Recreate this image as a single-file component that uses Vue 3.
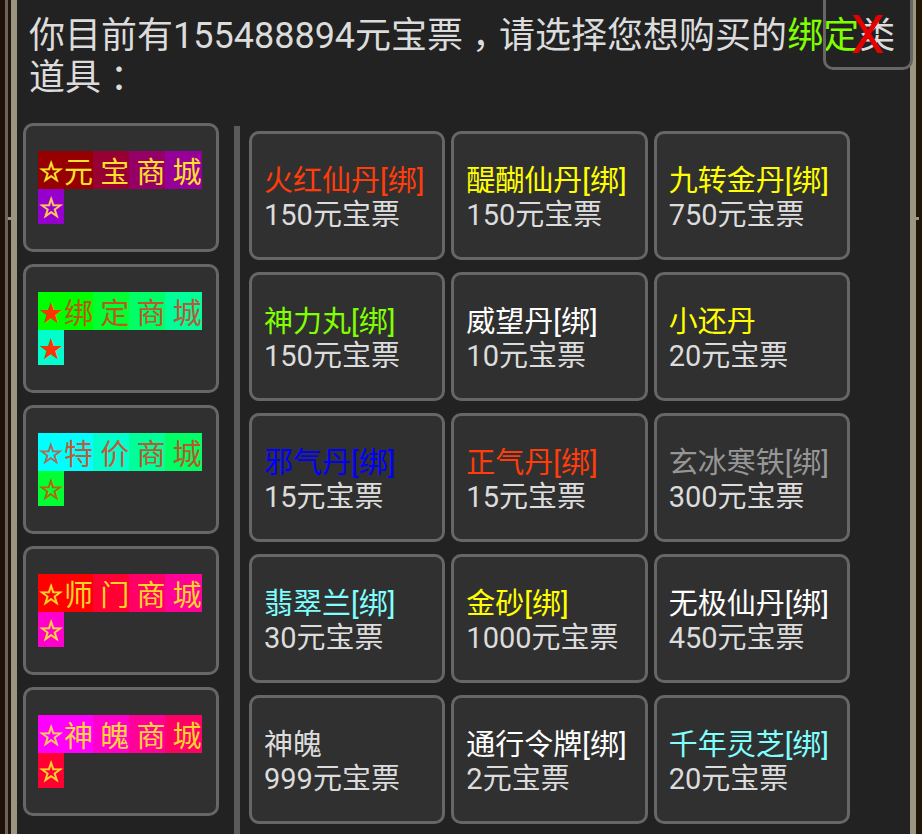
<script setup>
const categories = [
  { star: '☆', name: '元宝商城', ink: ['#ffe02a', '#ffe02a', '#ffe02a', '#ffe02a', '#ffe02a', '#ffc85c'], fills: ['#960000', '#960000', '#960033', '#960066', '#960099', '#9600cc'] },
  { star: '★', name: '绑定商城', ink: ['#ff3300', '#b85a0a', '#b85a1e', '#b85a32', '#b85a3c', '#ff3300'], fills: ['#00ff00', '#00ff00', '#00ff33', '#00ff66', '#00ff99', '#00ffcc'] },
  { star: '☆', name: '特价商城', ink: ['#a8705a', '#c05a3c', '#c05a3c', '#b85a32', '#b85a28', '#b06a0a'], fills: ['#00ffff', '#00ffff', '#00ffcc', '#00ff99', '#00ff66', '#00ff33'] },
  { star: '☆', name: '师门商城', ink: ['#ffd42a', '#ffd42a', '#ffd42a', '#ffd42a', '#ffd42a', '#ffd43c'], fills: ['#ff0000', '#ff0000', '#ff0033', '#ff0066', '#ff0099', '#ff00cc'] },
  { star: '☆', name: '神魄商城', ink: ['#ffc85c', '#ffd43c', '#ffd43c', '#ffd43c', '#ffd42a', '#ffd42a'], fills: ['#ff00ff', '#ff00ff', '#ff00cc', '#ff0099', '#ff0066', '#ff0033'] }
]

const tilesOf = (c) => [c.star, ...c.name, c.star].map((text, i) => ({
  text: i > 1 && i < 5 ? ' ' + text : text,
  star: i === 0 || i === 5,
  hollow: text === '☆',
  last: i === 5,
  style: { color: c.ink[i], background: c.fills[i] }
}))

const items = [
  { name: '火红仙丹[绑]', price: 150, color: '#ff3c0a' },
  { name: '醍醐仙丹[绑]', price: 150, color: '#ffff00' },
  { name: '九转金丹[绑]', price: 750, color: '#ffff00' },
  { name: '神力丸[绑]', price: 150, color: '#80ff00' },
  { name: '威望丹[绑]', price: 10, color: '#ffffff' },
  { name: '小还丹', price: 20, color: '#ffff00' },
  { name: '邪气丹[绑]', price: 15, color: '#0000ff' },
  { name: '正气丹[绑]', price: 15, color: '#ff3c0a' },
  { name: '玄冰寒铁[绑]', price: 300, color: '#969696' },
  { name: '翡翠兰[绑]', price: 30, color: '#80ffff' },
  { name: '金砂[绑]', price: 1000, color: '#ffff00' },
  { name: '无极仙丹[绑]', price: 450, color: '#ffffff' },
  { name: '神魄', price: 999, color: '#dcdcdc' },
  { name: '通行令牌[绑]', price: 2, color: '#ffffff' },
  { name: '千年灵芝[绑]', price: 20, color: '#80ffff' }
]
</script>

<template>
  <div class="frame">
    <div class="rail rail-left"></div>
    <main class="panel">
      <p class="intro">你目前有155488894元宝票<span class="mark">，</span>请选择您想购买的<span class="bound">绑定</span>类道具<span class="mark">：</span></p>
      <div class="shop">
        <nav class="side">
          <button v-for="c in categories" :key="c.name" type="button" class="card category">
            <span v-for="(t, i) in tilesOf(c)" :key="i" class="tile" :class="{ star: t.star, hollow: t.hollow, last: t.last }" :style="t.style">{{ t.text }}</span>
          </button>
        </nav>
        <section class="goods">
          <button v-for="item in items" :key="item.name" type="button" class="card item">
            <span :style="{ color: item.color }">{{ item.name }}</span>
            <span>{{ item.price }}元宝票</span>
          </button>
        </section>
      </div>
    </main>
    <div class="rail rail-right"></div>
    <button type="button" class="close">X</button>
  </div>
</template>

<style>
body {
  margin: 0;
  background: #222222;
}
</style>

<style scoped>
.frame {
  position: relative;
  display: flex;
  min-height: 100vh;
  overflow: hidden;
  background: #222222;
  color: #dcdcdc;
  font-family: Roboto, "Noto Sans CJK SC", sans-serif;
}
.rail {
  position: relative;
  flex: none;
  box-sizing: border-box;
}
.rail::after {
  content: "";
  position: absolute;
  top: 217px;
  height: 3px;
  background: #9a9682;
}
.rail-left {
  width: 17px;
  background: linear-gradient(90deg, #211006 5px, #6b6361 5px 8px, #241307 8px 11px, #9a9682 11px);
}
.rail-left::after {
  left: 8px;
  width: 3px;
}
.rail-right {
  width: 12px;
  background: linear-gradient(90deg, #9a9682 6px, #211606 6px);
}
.rail-right::after {
  left: 6px;
  width: 3px;
}
.panel {
  flex: 1;
  min-width: 0;
}
.intro {
  margin: 0;
  padding: 15px 13px 0 12px;
  font-size: 36px;
  line-height: 42px;
}
/* half-width punctuation centred in a full-width cell */
.mark {
  padding: 0 9px;
  font-feature-settings: "halt";
}
.bound {
  color: #80ff00;
}
.shop {
  display: flex;
  margin: 24px 60px 0 6px;
}
.side {
  display: flex;
  flex: none;
  flex-direction: column;
  gap: 12px;
  width: 196px;
}
.goods {
  display: grid;
  flex: 1;
  grid-template-columns: repeat(3, minmax(0, 1fr));
  align-content: start;
  gap: 12px 6px;
  margin: 3px 0 0 15px;
  padding: 5px 0 10px 9px;
  border-left: 6px solid #5a5a5a;
}
.card {
  display: flex;
  box-sizing: border-box;
  min-height: 129px;
  padding: 0 12px;
  border: 3px solid #666666;
  border-radius: 10px;
  background: #303030;
  color: inherit;
  font-family: inherit;
  font-size: 29px;
  line-height: 34px;
  text-align: left;
  white-space: pre;
}
.category {
  flex-wrap: wrap;
  align-content: center;
}
.item {
  flex-direction: column;
  justify-content: center;
  padding-top: 4px;
}
.tile {
  height: 38px;
  line-height: 44px;
}
.star {
  width: 26px;
  font-family: "DejaVu Sans", sans-serif;
  font-size: 29px;
  line-height: 42px;
  text-align: center;
}
.hollow {
  font-size: 27px;
  -webkit-text-stroke: 1px currentColor;
}
.last {
  height: 35px;
  line-height: 38px;
}
.close {
  position: absolute;
  top: -10px;
  right: 9px;
  box-sizing: border-box;
  width: 90px;
  height: 80px;
  padding: 9px 0 0;
  border: 3px solid #666666;
  border-radius: 10px;
  background: none;
  color: #e60000;
  font-family: Roboto, sans-serif;
  font-size: 54px;
  font-weight: 400;
  line-height: 60px;
}
</style>
